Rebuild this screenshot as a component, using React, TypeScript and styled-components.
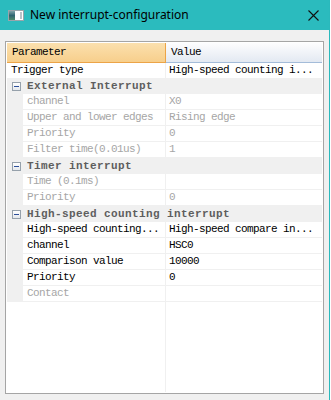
import React from "react";
import styled, { createGlobalStyle, css } from "styled-components";

const GlobalStyle = createGlobalStyle`
  html, body { margin: 0; padding: 0; background: #ffffff; }
  #root { width: 331px; height: 400px; }
`;

const MONO = `"Liberation Mono", "DejaVu Sans Mono", monospace`;

const Window = styled.div`
  width: 329px;
  height: 400px;
  border-right: 1px solid #2ab9bc;
  background: #f0f0f0;
  display: flex;
  flex-direction: column;
`;

const TitleBar = styled.div`
  height: 30px;
  flex: none;
  background: #2bbbbe;
  display: flex;
  align-items: center;
  padding-left: 8px;
  box-sizing: border-box;
`;

const TitleText = styled.span`
  margin-left: 6px;
  font-family: "Noto Sans", "Open Sans", sans-serif;
  font-size: 12px;
  color: #000;
  line-height: 30px;
`;

const CloseButton = styled.div`
  margin-left: auto;
  margin-right: 10px;
  width: 11px;
  height: 11px;
  display: flex;
`;

const Client = styled.div`
  flex: 1;
  padding: 11px 5px 6px 5px;
  display: flex;
`;

const Panel = styled.div`
  flex: 1;
  border: 1px solid #a5a5a5;
  background: #ffffff;
  padding: 1px;
  display: flex;
  flex-direction: column;
  overflow: hidden;
`;

const textBase = css`
  font-family: ${MONO};
  font-size: 11px;
  letter-spacing: -0.6px;
  white-space: nowrap;
  overflow: hidden;
`;

const HeaderRow = styled.div`
  display: flex;
  height: 20px;
  flex: none;
`;

const HeaderCell = styled.div<{ $variant: "param" | "value" }>`
  ${textBase};
  box-sizing: border-box;
  height: 20px;
  line-height: 19px;
  padding-left: 5px;
  color: #000;
  ${(p) =>
    p.$variant === "param"
      ? css`
          width: 159px;
          background: linear-gradient(#fbe0ae, #f7cf8c);
          border-right: 1px solid #eca447;
          border-bottom: 1px solid #eca447;
        `
      : css`
          flex: 1;
          background: linear-gradient(#fdfdfe, #e3e9f2);
          border-bottom: 1px solid #a4bcd9;
        `}
`;

const Row = styled.div<{ $kind: "top" | "child" | "category" }>`
  display: flex;
  flex: none;
  height: ${(p) => (p.$kind === "top" ? 15 : 16)}px;
  background: ${(p) => (p.$kind === "category" ? "#f0f0f0" : "#ffffff")};
`;

const Gutter = styled.div`
  width: 16px;
  flex: none;
  background: #f0f0f0;
  display: flex;
  align-items: center;
  padding-left: 5px;
  box-sizing: border-box;
`;

const NameCell = styled.div<{ $disabled?: boolean; $wide?: boolean }>`
  ${textBase};
  box-sizing: border-box;
  width: ${(p) => (p.$wide ? 159 : 143)}px;
  flex: none;
  padding-left: 4px;
  line-height: 15px;
  border-right: 1px solid #f0f0f0;
  border-bottom: ${(p) => (p.$wide ? "none" : "1px solid #f0f0f0")};
  color: ${(p) => (p.$disabled ? "#a6a6a6" : "#000000")};
`;

const ValueCell = styled.div<{ $disabled?: boolean; $top?: boolean }>`
  ${textBase};
  box-sizing: border-box;
  flex: 1;
  padding-left: 3px;
  line-height: 15px;
  border-bottom: ${(p) => (p.$top ? "none" : "1px solid #f0f0f0")};
  color: ${(p) => (p.$disabled ? "#a6a6a6" : "#000000")};
`;

const CategoryText = styled.div`
  font-family: ${MONO};
  font-size: 11px;
  font-weight: bold;
  letter-spacing: 0.4px;
  white-space: nowrap;
  overflow: hidden;
  flex: 1;
  padding-left: 4px;
  line-height: 16px;
  color: #5e5e5e;
`;

const ExpandBox = styled.div`
  width: 9px;
  height: 9px;
  box-sizing: border-box;
  border: 1px solid #96a1ab;
  background: linear-gradient(#ffffff, #e4e8ec);
  display: flex;
  align-items: center;
  justify-content: center;
`;

const Minus = styled.div`
  width: 5px;
  height: 1px;
  background: #2d4f9a;
`;

const Filler = styled.div`
  flex: 1;
  display: flex;
`;

const FillerLeft = styled.div`
  width: 159px;
  box-sizing: border-box;
  border-right: 1px solid #f0f0f0;
`;

type Item =
  | { type: "top"; name: string; value: string }
  | { type: "category"; name: string }
  | { type: "child"; name: string; value: string; disabled?: boolean };

const items: Item[] = [
  { type: "top", name: "Trigger type", value: "High-speed counting i..." },
  { type: "category", name: "External Interrupt" },
  { type: "child", name: "channel", value: "X0", disabled: true },
  { type: "child", name: "Upper and lower edges", value: "Rising edge", disabled: true },
  { type: "child", name: "Priority", value: "0", disabled: true },
  { type: "child", name: "Filter time(0.01us)", value: "1", disabled: true },
  { type: "category", name: "Timer interrupt" },
  { type: "child", name: "Time (0.1ms)", value: "", disabled: true },
  { type: "child", name: "Priority", value: "0", disabled: true },
  { type: "category", name: "High-speed counting interrupt" },
  { type: "child", name: "High-speed counting...", value: "High-speed compare in..." },
  { type: "child", name: "channel", value: "HSC0" },
  { type: "child", name: "Comparison value", value: "10000" },
  { type: "child", name: "Priority", value: "0" },
  { type: "child", name: "Contact", value: "", disabled: true },
];

const WindowIcon = () => (
  <svg width="16" height="11" viewBox="0 0 16 11">
    <defs>
      <linearGradient id="wi" x1="0" y1="0" x2="0" y2="1">
        <stop offset="0" stopColor="#7fa3a8" />
        <stop offset="0.5" stopColor="#2f6470" />
        <stop offset="1" stopColor="#4f8a6a" />
      </linearGradient>
    </defs>
    <rect x="0.5" y="0.5" width="15" height="10" fill="#ffffff" stroke="#9aa5ab" />
    <rect x="1" y="1" width="6" height="9" fill="url(#wi)" />
    <rect x="12" y="2" width="2" height="7" fill="#b8c2c8" />
  </svg>
);

const CloseIcon = () => (
  <svg width="11" height="11" viewBox="0 0 11 11">
    <path d="M0.5 0.5 L10.5 10.5 M10.5 0.5 L0.5 10.5" stroke="#111" strokeWidth="1.1" fill="none" />
  </svg>
);

export default function App() {
  return (
    <>
      <GlobalStyle />
      <Window>
        <TitleBar>
          <WindowIcon />
          <TitleText>New interrupt-configuration</TitleText>
          <CloseButton>
            <CloseIcon />
          </CloseButton>
        </TitleBar>
        <Client>
          <Panel>
            <HeaderRow>
              <HeaderCell $variant="param">Parameter</HeaderCell>
              <HeaderCell $variant="value">Value</HeaderCell>
            </HeaderRow>
            {items.map((it, i) => {
              if (it.type === "top") {
                return (
                  <Row key={i} $kind="top">
                    <NameCell $wide>{it.name}</NameCell>
                    <ValueCell $top>{it.value}</ValueCell>
                  </Row>
                );
              }
              if (it.type === "category") {
                return (
                  <Row key={i} $kind="category">
                    <Gutter>
                      <ExpandBox>
                        <Minus />
                      </ExpandBox>
                    </Gutter>
                    <CategoryText>{it.name}</CategoryText>
                  </Row>
                );
              }
              return (
                <Row key={i} $kind="child">
                  <Gutter />
                  <NameCell $disabled={it.disabled}>{it.name}</NameCell>
                  <ValueCell $disabled={it.disabled}>{it.value}</ValueCell>
                </Row>
              );
            })}
            <Filler>
              <FillerLeft />
            </Filler>
          </Panel>
        </Client>
      </Window>
    </>
  );
}
